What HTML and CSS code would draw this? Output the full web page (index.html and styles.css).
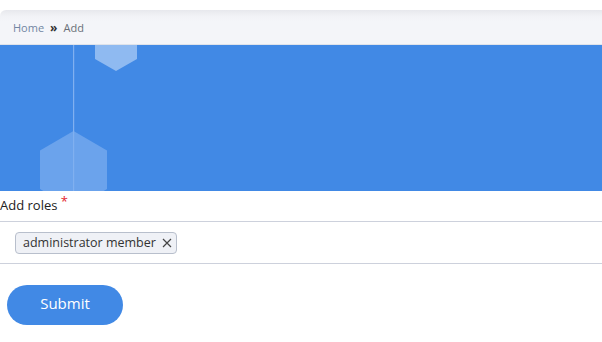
FILE: index.html
```html
<!DOCTYPE html>
<html lang="en">
<head>
    <meta charset="UTF-8">
    <meta name="viewport" content="width=device-width, initial-scale=1.0">
    <title>Add roles</title>
    <link rel="stylesheet" href="styles.css">
</head>
<body>
    <div class="page">
        <div class="breadcrumb">
            <a href="#" class="crumb-link">Home</a>
            <span class="crumb-sep">&raquo;</span>
            <span class="crumb-current">Add</span>
        </div>

        <div class="banner">
            <svg class="banner-art" viewBox="0 0 602 146" preserveAspectRatio="none">
                <rect x="0" y="0" width="602" height="146" fill="#4189e5"/>
                <polygon points="116,-22.4 137,-10.3 137,13.9 116,26 95,13.9 95,-10.3" fill="#8fbaf1"/>
                <polygon points="73.5,86 107,105.4 107,144.1 73.5,163.4 40,144.1 40,105.4" fill="#6ba3ec"/>
                <rect x="73" y="0" width="1.2" height="146" fill="#80b0f0"/>
            </svg>
        </div>

        <form class="form">
            <label class="field-label">Add roles <span class="required">*</span></label>
            <div class="tag-input">
                <span class="tag">administrator member
                    <svg class="tag-remove" viewBox="0 0 10 10" width="10" height="10">
                        <path d="M1 1 L9 9 M9 1 L1 9" stroke="#444" stroke-width="1.2"/>
                    </svg>
                </span>
            </div>
            <button type="button" class="submit">Submit</button>
        </form>
    </div>
</body>
</html>
```

FILE: styles.css
```css
body {
    margin: 0;
    background: #fff;
    font-family: "Open Sans", "DejaVu Sans", sans-serif;
}
.page {
    padding-top: 10px;
}
.breadcrumb {
    height: 35px;
    box-sizing: border-box;
    padding: 0 13px;
    display: flex;
    align-items: center;
    gap: 6px;
    font-size: 11px;
    background: linear-gradient(to bottom, #e7e8ed 0, #f1f2f6 6px, #f4f5f9 12px);
    border-top-left-radius: 6px;
    border-bottom: 1px solid #dfe3ea;
}
.crumb-link {
    color: #7286a3;
    text-decoration: none;
}
.crumb-sep {
    color: #333;
    font-weight: bold;
    font-size: 12px;
}
.crumb-current {
    color: #6a6f78;
}
.banner {
    height: 146px;
}
.banner-art {
    display: block;
    width: 100%;
    height: 146px;
}
.form {
    padding-top: 0;
}
.field-label {
    display: block;
    font-size: 13px;
    color: #222;
    height: 30px;
    line-height: 20px;
}
.required {
    color: #e3262f;
    vertical-align: 4px;
}
.tag-input {
    height: 41px;
    border-top: 1px solid #cdd1dc;
    border-bottom: 1px solid #cdd1dc;
    display: flex;
    align-items: center;
    padding-left: 15px;
}
.tag {
    display: inline-flex;
    align-items: center;
    gap: 6px;
    height: 22px;
    box-sizing: border-box;
    padding: 0 4px 0 7px;
    font-size: 12.5px;
    color: #333;
    background: #eff1f6;
    border: 1px solid #b8bfcc;
    border-radius: 4px;
}
.submit {
    margin: 21px 0 0 7px;
    width: 116px;
    height: 40px;
    border: none;
    border-radius: 20px;
    background: #4189e5;
    color: #fff;
    font-family: inherit;
    font-size: 15px;
    line-height: 36px;
    padding: 0 0 4px;
    cursor: pointer;
}
```
